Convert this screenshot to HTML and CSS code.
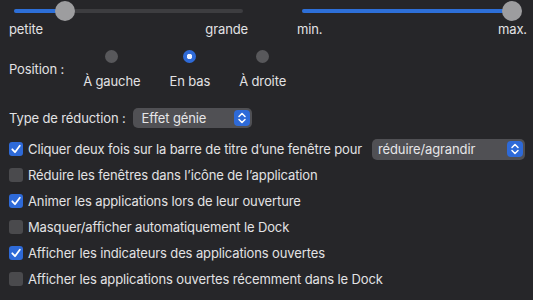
FILE: index.html
```html
<!DOCTYPE html>
<html lang="fr">
<head>
<meta charset="utf-8">
<link rel="stylesheet" href="styles.css">
</head>
<body>
<div class="pane">
  <div class="sliders">
    <div class="slider size">
      <div class="track"><div class="fill" style="width:51px"></div><div class="thumb" style="left:41px"></div></div>
      <div class="ends"><span>petite</span><span>grande</span></div>
    </div>
    <div class="slider mag">
      <div class="track"><div class="fill" style="width:210px"></div><div class="thumb" style="left:200px"></div></div>
      <div class="ends"><span>min.</span><span>max.</span></div>
    </div>
  </div>

  <div class="position">
    <span class="label">Position :</span>
    <div class="radios">
      <div class="radio-col"><span class="radio"></span><span>À gauche</span></div>
      <div class="radio-col"><span class="radio on"></span><span>En bas</span></div>
      <div class="radio-col"><span class="radio"></span><span>À droite</span></div>
    </div>
  </div>

  <div class="row type">
    <span class="label">Type de réduction :</span>
    <div class="popup effect"><span>Effet génie</span><span class="stepper"><svg viewBox="0 0 16 16" width="16" height="16"><path d="M5 6.5 L8 3.5 L11 6.5 M5 9.5 L8 12.5 L11 9.5" fill="none" stroke="#fff" stroke-width="1.5" stroke-linecap="round" stroke-linejoin="round"/></svg></span></div>
  </div>

  <div class="row check">
    <span class="box on"><svg viewBox="0 0 14 14" width="14" height="14"><path d="M3.3 7.3 L6 10.2 L10.8 3.8" fill="none" stroke="#fff" stroke-width="1.8" stroke-linecap="round" stroke-linejoin="round"/></svg></span>
    <span>Cliquer deux fois sur la barre de titre d’une fenêtre pour</span>
    <div class="popup action"><span>réduire/agrandir</span><span class="stepper"><svg viewBox="0 0 16 16" width="16" height="16"><path d="M5 6.5 L8 3.5 L11 6.5 M5 9.5 L8 12.5 L11 9.5" fill="none" stroke="#fff" stroke-width="1.5" stroke-linecap="round" stroke-linejoin="round"/></svg></span></div>
  </div>
  <div class="row check">
    <span class="box"></span>
    <span>Réduire les fenêtres dans l’icône de l’application</span>
  </div>
  <div class="row check">
    <span class="box on"><svg viewBox="0 0 14 14" width="14" height="14"><path d="M3.3 7.3 L6 10.2 L10.8 3.8" fill="none" stroke="#fff" stroke-width="1.8" stroke-linecap="round" stroke-linejoin="round"/></svg></span>
    <span>Animer les applications lors de leur ouverture</span>
  </div>
  <div class="row check">
    <span class="box"></span>
    <span>Masquer/afficher automatiquement le Dock</span>
  </div>
  <div class="row check">
    <span class="box on"><svg viewBox="0 0 14 14" width="14" height="14"><path d="M3.3 7.3 L6 10.2 L10.8 3.8" fill="none" stroke="#fff" stroke-width="1.8" stroke-linecap="round" stroke-linejoin="round"/></svg></span>
    <span>Afficher les indicateurs des applications ouvertes</span>
  </div>
  <div class="row check">
    <span class="box"></span>
    <span>Afficher les applications ouvertes récemment dans le Dock</span>
  </div>
</div>
</body>
</html>
```

FILE: styles.css
```css
html, body {
  margin: 0;
  padding: 0;
  background: #262629;
  width: 533px;
  height: 300px;
  overflow: hidden;
}
.pane {
  font-family: Inter, "Liberation Sans", Arial, sans-serif;
  font-size: 13px;
  letter-spacing: -0.12px;
  white-space: nowrap;
  color: #e2e2e4;
  padding: 0 6px 0 9px;
}
.sliders {
  display: flex;
  gap: 49px;
}
.slider.size { width: 239px; }
.slider.mag { width: 230px; }
.track {
  position: relative;
  height: 4px;
  margin: 9px 5px 9px 5px;
  background: #3d3d40;
  border-radius: 2px;
}
.fill {
  height: 4px;
  border-radius: 2px;
  background: #2d6fd8;
}
.thumb {
  position: absolute;
  top: -8px;
  width: 20px;
  height: 20px;
  border-radius: 50%;
  background: #9d9d9f;
}
.ends {
  display: flex;
  justify-content: space-between;
  line-height: 16px;
  margin-top: -1px;
}
.position {
  display: flex;
  align-items: center;
  margin-top: 13px;
  height: 38px;
}
.label { flex: none; }
.radios {
  display: flex;
  gap: 29px;
  margin-left: 19px;
}
.radio-col {
  display: flex;
  flex-direction: column;
  align-items: center;
  gap: 10px;
  line-height: 16px;
}
.radio {
  width: 13px;
  height: 13px;
  border-radius: 50%;
  background: #58585b;
}
.radio.on {
  background: radial-gradient(circle, #eef3ff 0 2.5px, #2e6ad8 3px);
}
.row {
  display: flex;
  align-items: center;
}
.type {
  height: 20px;
  margin-top: 20px;
  margin-bottom: 8px;
}
.popup {
  display: flex;
  align-items: center;
  justify-content: space-between;
  box-sizing: border-box;
  height: 20px;
  border-radius: 5px;
  background: #505054;
  color: #e6e6e8;
  padding: 0 2px 0 9px;
}
.popup.effect {
  width: 119px;
  margin-left: 7px;
}
.popup.action {
  width: 153px;
  height: 21px;
  margin-left: auto;
  margin-right: 2px;
  padding-left: 6px;
}
.stepper {
  display: flex;
  width: 16px;
  height: 16px;
  border-radius: 4px;
  background: #2e6ad8;
}
.check {
  height: 26px;
  gap: 5px;
}
.box {
  flex: none;
  width: 14px;
  height: 14px;
  border-radius: 3px;
  background: #4a4a4d;
  display: flex;
}
.box.on { background: #2e6ad8; }
```
